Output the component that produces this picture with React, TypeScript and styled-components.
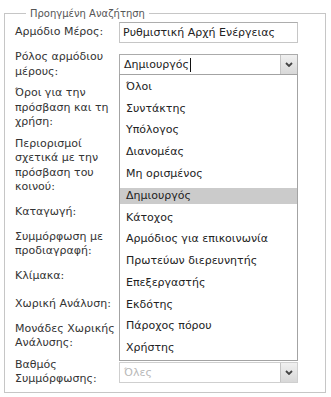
import React from 'react';
import styled, { createGlobalStyle } from 'styled-components';

const GlobalStyle = createGlobalStyle`
  html, body {
    margin: 0;
    padding: 0;
    background: #ffffff;
  }
  body {
    font-family: "DejaVu Sans", Verdana, sans-serif;
    font-size: 11px;
    color: #333333;
  }
`;

const Page = styled.div`
  padding: 7px 0 0 4px;
`;

const Fieldset = styled.fieldset`
  box-sizing: border-box;
  width: 322px;
  margin: 0;
  padding: 2px 26px 5px 10px;
  border: 1px solid #c6c6c6;
`;

const Legend = styled.legend`
  margin-left: 11px;
  padding: 0 4px;
  font-size: 10px;
  line-height: 13px;
  color: #555555;
`;

const Form = styled.div`
  display: flex;
  flex-direction: column;
  gap: 7px;
`;

const Row = styled.div`
  display: grid;
  grid-template-columns: 104px 179px;
  align-items: center;
`;

const Label = styled.label`
  line-height: 14.5px;
  color: #333333;
`;

const ControlCell = styled.div`
  position: relative;
`;

const TextInput = styled.div`
  box-sizing: border-box;
  height: 21px;
  padding: 0 3px;
  border: 1px solid #c6c6c6;
  border-top-color: #adadad;
  line-height: 19px;
  color: #222222;
  white-space: nowrap;
  overflow: hidden;
`;

const Combo = styled.div<{ $disabled?: boolean }>`
  box-sizing: border-box;
  display: flex;
  height: 21px;
  border: 1px solid ${p => (p.$disabled ? '#cfcfcf' : '#ababab')};
  background: #ffffff;
`;

const ComboText = styled.div<{ $disabled?: boolean }>`
  flex: 1;
  display: flex;
  align-items: center;
  padding-left: 4px;
  color: ${p => (p.$disabled ? '#b8b8b8' : '#222222')};
  white-space: nowrap;
  overflow: hidden;
`;

const Caret = styled.span`
  display: inline-block;
  width: 0;
  height: 14px;
  margin-left: 1px;
  border-left: 1px solid #111111;
`;

const ArrowButton = styled.div`
  width: 16px;
  display: flex;
  align-items: center;
  justify-content: center;
  border-left: 1px solid #c4c4c4;
  background: linear-gradient(#f0f0f0, #d8d8d8);
`;

const List = styled.ul`
  position: absolute;
  z-index: 10;
  left: 0;
  top: calc(100% - 1px);
  box-sizing: border-box;
  width: 100%;
  margin: 0;
  padding: 1px 0;
  list-style: none;
  display: flex;
  flex-direction: column;
  border: 1px solid #a3a3a3;
  background: #ffffff;
`;

const Item = styled.li<{ $active?: boolean }>`
  height: 16px;
  margin: 2.9px 0;
  padding-left: 6px;
  line-height: 16px;
  color: #222222;
  white-space: nowrap;
  background: ${p => (p.$active ? '#cbcbcb' : 'transparent')};
`;

const Chevron = () => (
  <svg width="8" height="5" viewBox="0 0 8 5">
    <path d="M1 1 L4 4 L7 1" fill="none" stroke="#444444" strokeWidth="1.8" />
  </svg>
);

const roles = [
  'Όλοι',
  'Συντάκτης',
  'Υπόλογος',
  'Διανομέας',
  'Μη ορισμένος',
  'Δημιουργός',
  'Κάτοχος',
  'Αρμόδιος για επικοινωνία',
  'Πρωτεύων διερευνητής',
  'Επεξεργαστής',
  'Εκδότης',
  'Πάροχος πόρου',
  'Χρήστης',
];

// rows whose controls sit under the open list
const coveredRows = [
  ['Όροι για την', 'πρόσβαση και τη', 'χρήση:'],
  ['Περιορισμοί', 'σχετικά με την', 'πρόσβαση του', 'κοινού:'],
  ['Καταγωγή:'],
  ['Συμμόρφωση με', 'προδιαγραφή:'],
  ['Κλίμακα:'],
  ['Χωρική Ανάλυση:'],
  ['Μονάδες Χωρικής', 'Ανάλυσης:'],
];

const Lines: React.FC<{ lines: string[] }> = ({ lines }) => (
  <Label>
    {lines.map((l, i) => (
      <React.Fragment key={l}>
        {i > 0 && <br />}
        {l}
      </React.Fragment>
    ))}
  </Label>
);

const App: React.FC = () => {
  return (
    <Page>
      <GlobalStyle />
      <Fieldset>
        <Legend>Προηγμένη Αναζήτηση</Legend>
        <Form>
          <Row>
            <Label>Αρμόδιο Μέρος:</Label>
            <TextInput>Ρυθμιστική Αρχή Ενέργειας</TextInput>
          </Row>

          <Row>
            <Lines lines={['Ρόλος αρμόδιου', 'μέρους:']} />
            <ControlCell>
              <Combo>
                <ComboText>
                  Δημιουργός
                  <Caret />
                </ComboText>
                <ArrowButton>
                  <Chevron />
                </ArrowButton>
              </Combo>
              <List>
                {roles.map(r => (
                  <Item key={r} $active={r === 'Δημιουργός'}>
                    {r}
                  </Item>
                ))}
              </List>
            </ControlCell>
          </Row>

          {coveredRows.map(lines => (
            <Row key={lines[0]}>
              <Lines lines={lines} />
              <Combo $disabled>
                <ComboText $disabled />
                <ArrowButton>
                  <Chevron />
                </ArrowButton>
              </Combo>
            </Row>
          ))}

          <Row>
            <Lines lines={['Βαθμός', 'Συμμόρφωσης:']} />
            <Combo $disabled>
              <ComboText $disabled>Όλες</ComboText>
              <ArrowButton>
                <Chevron />
              </ArrowButton>
            </Combo>
          </Row>
        </Form>
      </Fieldset>
    </Page>
  );
};

export default App;
